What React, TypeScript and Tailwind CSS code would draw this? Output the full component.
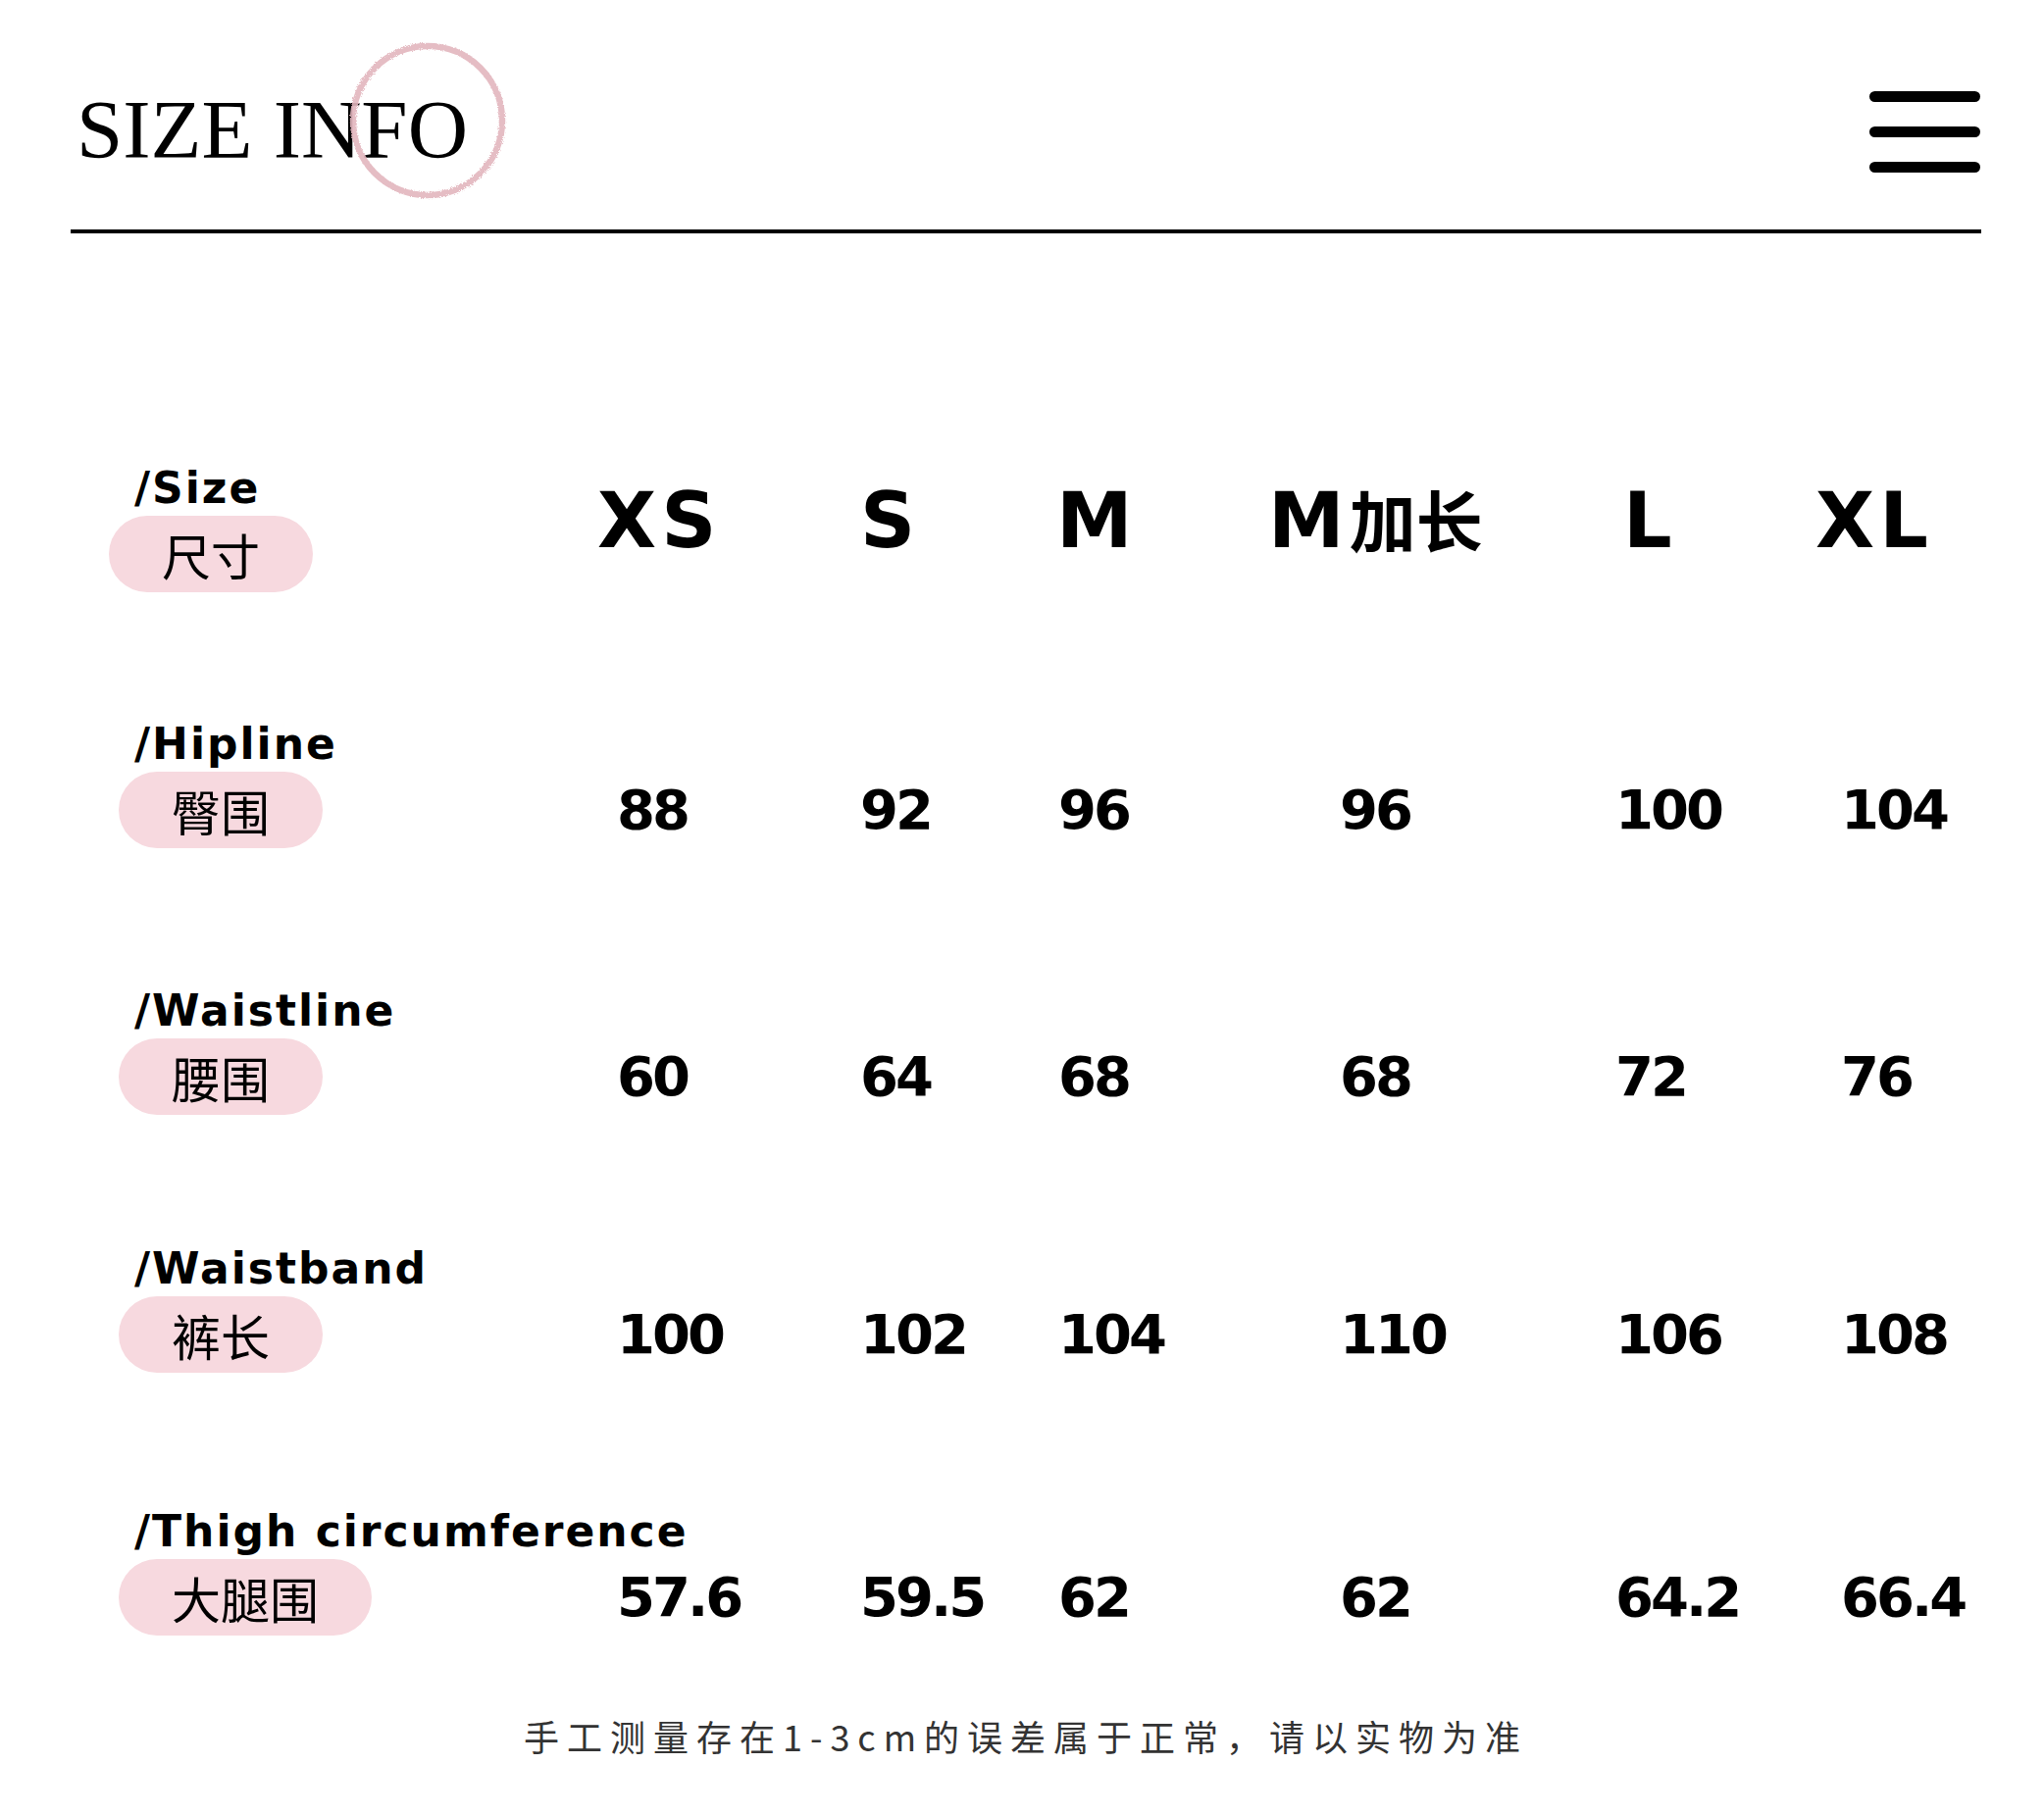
import React from "react";

const sizes = [
  { label: "XS", shift: "ml-[-20px]" },
  { label: "S", shift: "ml-[0px]" },
  { label: "M", shift: "ml-[-2px]" },
  { label: "M", cjk: "加长", shift: "ml-[-73px]" },
  { label: "L", shift: "ml-[8px]" },
  { label: "XL", shift: "ml-[-26px]" },
];

const rows = [
  { en: "Hipline", zh: "臀围", gap: "mt-[133px]", values: ["88", "92", "96", "96", "100", "104"] },
  { en: "Waistline", zh: "腰围", gap: "mt-[144px]", values: ["60", "64", "68", "68", "72", "76"] },
  { en: "Waistband", zh: "裤长", gap: "mt-[135px]", values: ["100", "102", "104", "110", "106", "108"] },
  {
    en: "Thigh circumference",
    zh: "大腿围",
    gap: "mt-[140px]",
    values: ["57.6", "59.5", "62", "62", "64.2", "66.4"],
  },
];

const sans = "font-['DejaVu_Sans','Noto_Sans_CJK_SC',sans-serif]";
const cjk = "font-['Noto_Sans_CJK_SC',sans-serif]";
const cols = "grid grid-cols-[508px_248px_202px_287px_281px_230px_1fr]";

function RoughCircle() {
  return (
    <svg
      className="absolute left-[268px] top-[-57px] pointer-events-none"
      width="180"
      height="180"
      viewBox="0 0 180 180"
    >
      <defs>
        <filter id="chalk" x="-10%" y="-10%" width="120%" height="120%">
          <feTurbulence type="fractalNoise" baseFrequency="0.9" numOctaves="2" seed="3" result="noise" />
          <feDisplacementMap in="SourceGraphic" in2="noise" scale="4" />
        </filter>
      </defs>
      <circle cx="90" cy="90" r="76" fill="none" stroke="#e3b6be" strokeWidth="6.5" opacity="0.9" filter="url(#chalk)" />
    </svg>
  );
}

function Label({ text }: { text: string }) {
  return (
    <div className={`${sans} ml-[16px] text-[44px] font-bold leading-none tracking-[2px] text-black whitespace-nowrap`}>
      /{text}
    </div>
  );
}

function Pill({ text, className = "" }: { text: string; className?: string }) {
  return (
    <div
      className={`${cjk} mt-[6px] inline-flex h-[78px] items-center rounded-full bg-[#f7d9df] px-[54px] text-[50px] leading-none text-black ${className}`}
    >
      {text}
    </div>
  );
}

export default function App() {
  return (
    <div className="w-[2084px] h-[1850px] bg-white pl-[72px] pr-[64px]">
      {/* header */}
      <div className="flex items-start justify-between pt-[90px]">
        <div className="relative ml-[6px]">
          <h1 className="font-['Liberation_Serif',serif] text-[85px] leading-none text-black">
            SIZE INFO
          </h1>
          <RoughCircle />
        </div>
        <div className="mt-[3px] mr-[1px] flex w-[113px] flex-col gap-[25px]">
          <div className="h-[11px] rounded-full bg-black" />
          <div className="h-[11px] rounded-full bg-black" />
          <div className="h-[11px] rounded-full bg-black" />
        </div>
      </div>
      <div className="mt-[58px] h-[4px] bg-black" />

      {/* table */}
      <div className="pl-[49px] mt-[238px]">
        <div className={cols}>
          <div className="flex flex-col items-start">
            <Label text="Size" />
            <Pill text="尺寸" className="ml-[-10px]" />
          </div>
          {sizes.map((s, i) => (
            <div
              key={i}
              className={`${sans} ${s.shift} mt-[16px] self-start whitespace-nowrap text-[78px] font-bold leading-none tracking-[5px] text-black`}
            >
              {s.label}
              {s.cjk && <span className="text-[68px] tracking-normal">{s.cjk}</span>}
            </div>
          ))}
        </div>

        {rows.map((row) => (
          <div key={row.en} className={`${cols} ${row.gap}`}>
            <div className="flex flex-col items-start">
              <Label text={row.en} />
              <Pill text={row.zh} />
            </div>
            {row.values.map((v, i) => (
              <div
                key={i}
                className={`${sans} flex h-[78px] items-center self-end text-[56px] font-bold leading-none tracking-[-3px] text-black`}
              >
                {v}
              </div>
            ))}
          </div>
        ))}
      </div>

      {/* footnote */}
      <p className={`${cjk} mt-[84px] text-center text-[36px] leading-none tracking-[8px] text-[#333333]`}>
        手工测量存在1-3cm的误差属于正常，请以实物为准
      </p>
    </div>
  );
}
